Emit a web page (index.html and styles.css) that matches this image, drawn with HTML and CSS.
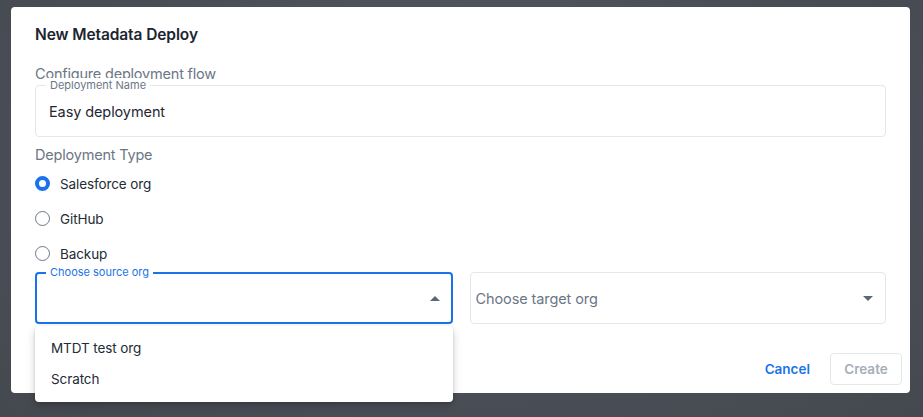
FILE: index.html
```html
<!DOCTYPE html>
<html>
<head>
<meta charset="utf-8">
<link rel="stylesheet" href="styles.css">
</head>
<body>
<div class="dialog">
  <div class="title">New Metadata Deploy</div>
  <div class="section">Configure deployment flow</div>
  <div class="field">
    <span class="float-label">Deployment Name</span>
    <span class="value">Easy deployment</span>
  </div>
  <div class="section type">Deployment Type</div>
  <div class="radios">
    <div class="radio-row"><span class="radio checked"></span><span class="rlabel">Salesforce org</span></div>
    <div class="radio-row"><span class="radio"></span><span class="rlabel">GitHub</span></div>
    <div class="radio-row"><span class="radio"></span><span class="rlabel">Backup</span></div>
  </div>
  <div class="selects">
    <div class="select active">
      <span class="float-label blue">Choose source org</span>
      <span class="spacer"></span>
      <span class="arrow up"></span>
      <div class="menu">
        <div class="item">MTDT test org</div>
        <div class="item">Scratch</div>
      </div>
    </div>
    <div class="select">
      <span class="placeholder">Choose target org</span>
      <span class="spacer"></span>
      <span class="arrow down"></span>
    </div>
  </div>
  <div class="footer">
    <button class="btn cancel">Cancel</button>
    <button class="btn create">Create</button>
  </div>
</div>
</body>
</html>
```
FILE: styles.css
```css
* { box-sizing: border-box; }
html, body { height: 100%; }
body {
  margin: 0;
  background: radial-gradient(ellipse at 50% 40%, #5b616a 0%, #4a4f57 60%, #44484f 100%);
  font-family: "Inter", "DejaVu Sans", sans-serif;
  color: #1f2733;
  overflow: hidden;
}
.dialog {
  margin: 7px 0 0 11px;
  width: 899px;
  height: 386px;
  background: #ffffff;
  border-radius: 4px;
  padding: 18px 24px 8px 24px;
  display: flex;
  flex-direction: column;
}
.dialog > * { flex-shrink: 0; }
.title {
  font-size: 15.5px;
  font-weight: 600;
  line-height: 20px;
  color: #1c2430;
  letter-spacing: -0.1px;
}
.section {
  margin-top: 19px;
  font-size: 14.5px;
  line-height: 20px;
  color: #6b7686;
  letter-spacing: -0.2px;
}
.section.type { margin-top: 8px; }
.field {
  position: relative;
  margin-top: 1px;
  height: 52px;
  border: 1px solid #e3e7ec;
  border-radius: 4px;
  display: flex;
  align-items: center;
  padding-left: 13px;
}
.float-label {
  position: absolute;
  top: -8px;
  left: 10px;
  padding: 0 4px;
  background: #ffffff;
  font-size: 11px;
  line-height: 14px;
  color: #6b7686;
}
.float-label.blue { color: #1a73e8; top: -9px; left: 9px; }
.value {
  font-size: 14.5px;
  color: #1f2733;
  letter-spacing: -0.1px;
}
.radios { display: flex; flex-direction: column; }
.radio-row {
  height: 35px;
  display: flex;
  align-items: center;
  gap: 10px;
}
.radio-row:first-child { margin-top: 1px; }
.radio {
  width: 15px;
  height: 15px;
  border-radius: 50%;
  border: 1.5px solid #6b7686;
  background: #fff;
  flex: none;
}
.radio.checked {
  border: 4.5px solid #1a73e8;
}
.rlabel {
  font-size: 13.5px;
  color: #232b36;
  letter-spacing: -0.1px;
}
.selects {
  margin-top: 1px;
  display: flex;
  gap: 17px;
}
.select {
  position: relative;
  flex: 1;
  height: 52px;
  border: 1px solid #e3e7ec;
  border-radius: 4px;
  display: flex;
  align-items: center;
  padding: 0 12px 0 5px;
}
.select.active {
  border: 2px solid #1a73e8;
  padding-right: 11px;
}
.spacer { flex: 1; }
.placeholder {
  font-size: 14.5px;
  color: #6b7686;
  letter-spacing: -0.1px;
}
.arrow {
  width: 0;
  height: 0;
  border-left: 5px solid transparent;
  border-right: 5px solid transparent;
}
.arrow.up { border-bottom: 5px solid #5d6877; }
.arrow.down { border-top: 5px solid #5d6877; }
.menu {
  position: absolute;
  top: 52px;
  left: -2px;
  right: -2px;
  background: #ffffff;
  border-radius: 4px;
  box-shadow: 0 4px 10px rgba(0,0,0,0.18), 0 1px 3px rgba(0,0,0,0.12);
  padding: 6px 0 8px 0;
  z-index: 5;
}
.item {
  height: 31px;
  display: flex;
  align-items: center;
  padding-left: 16px;
  font-size: 13.5px;
  color: #232b36;
  letter-spacing: -0.1px;
}
.footer {
  margin-top: 29px;
  margin-right: -16px;
  display: flex;
  justify-content: flex-end;
  align-items: center;
  gap: 20px;
}
.btn {
  font-family: inherit;
  font-size: 13.5px;
  font-weight: 600;
  background: #fff;
  cursor: pointer;
}
.cancel {
  border: none;
  color: #1a73e8;
  padding: 0;
}
.create {
  width: 72px;
  height: 32px;
  border: 1px solid #e3e7ec;
  border-radius: 4px;
  color: #a6adb7;
}
```
